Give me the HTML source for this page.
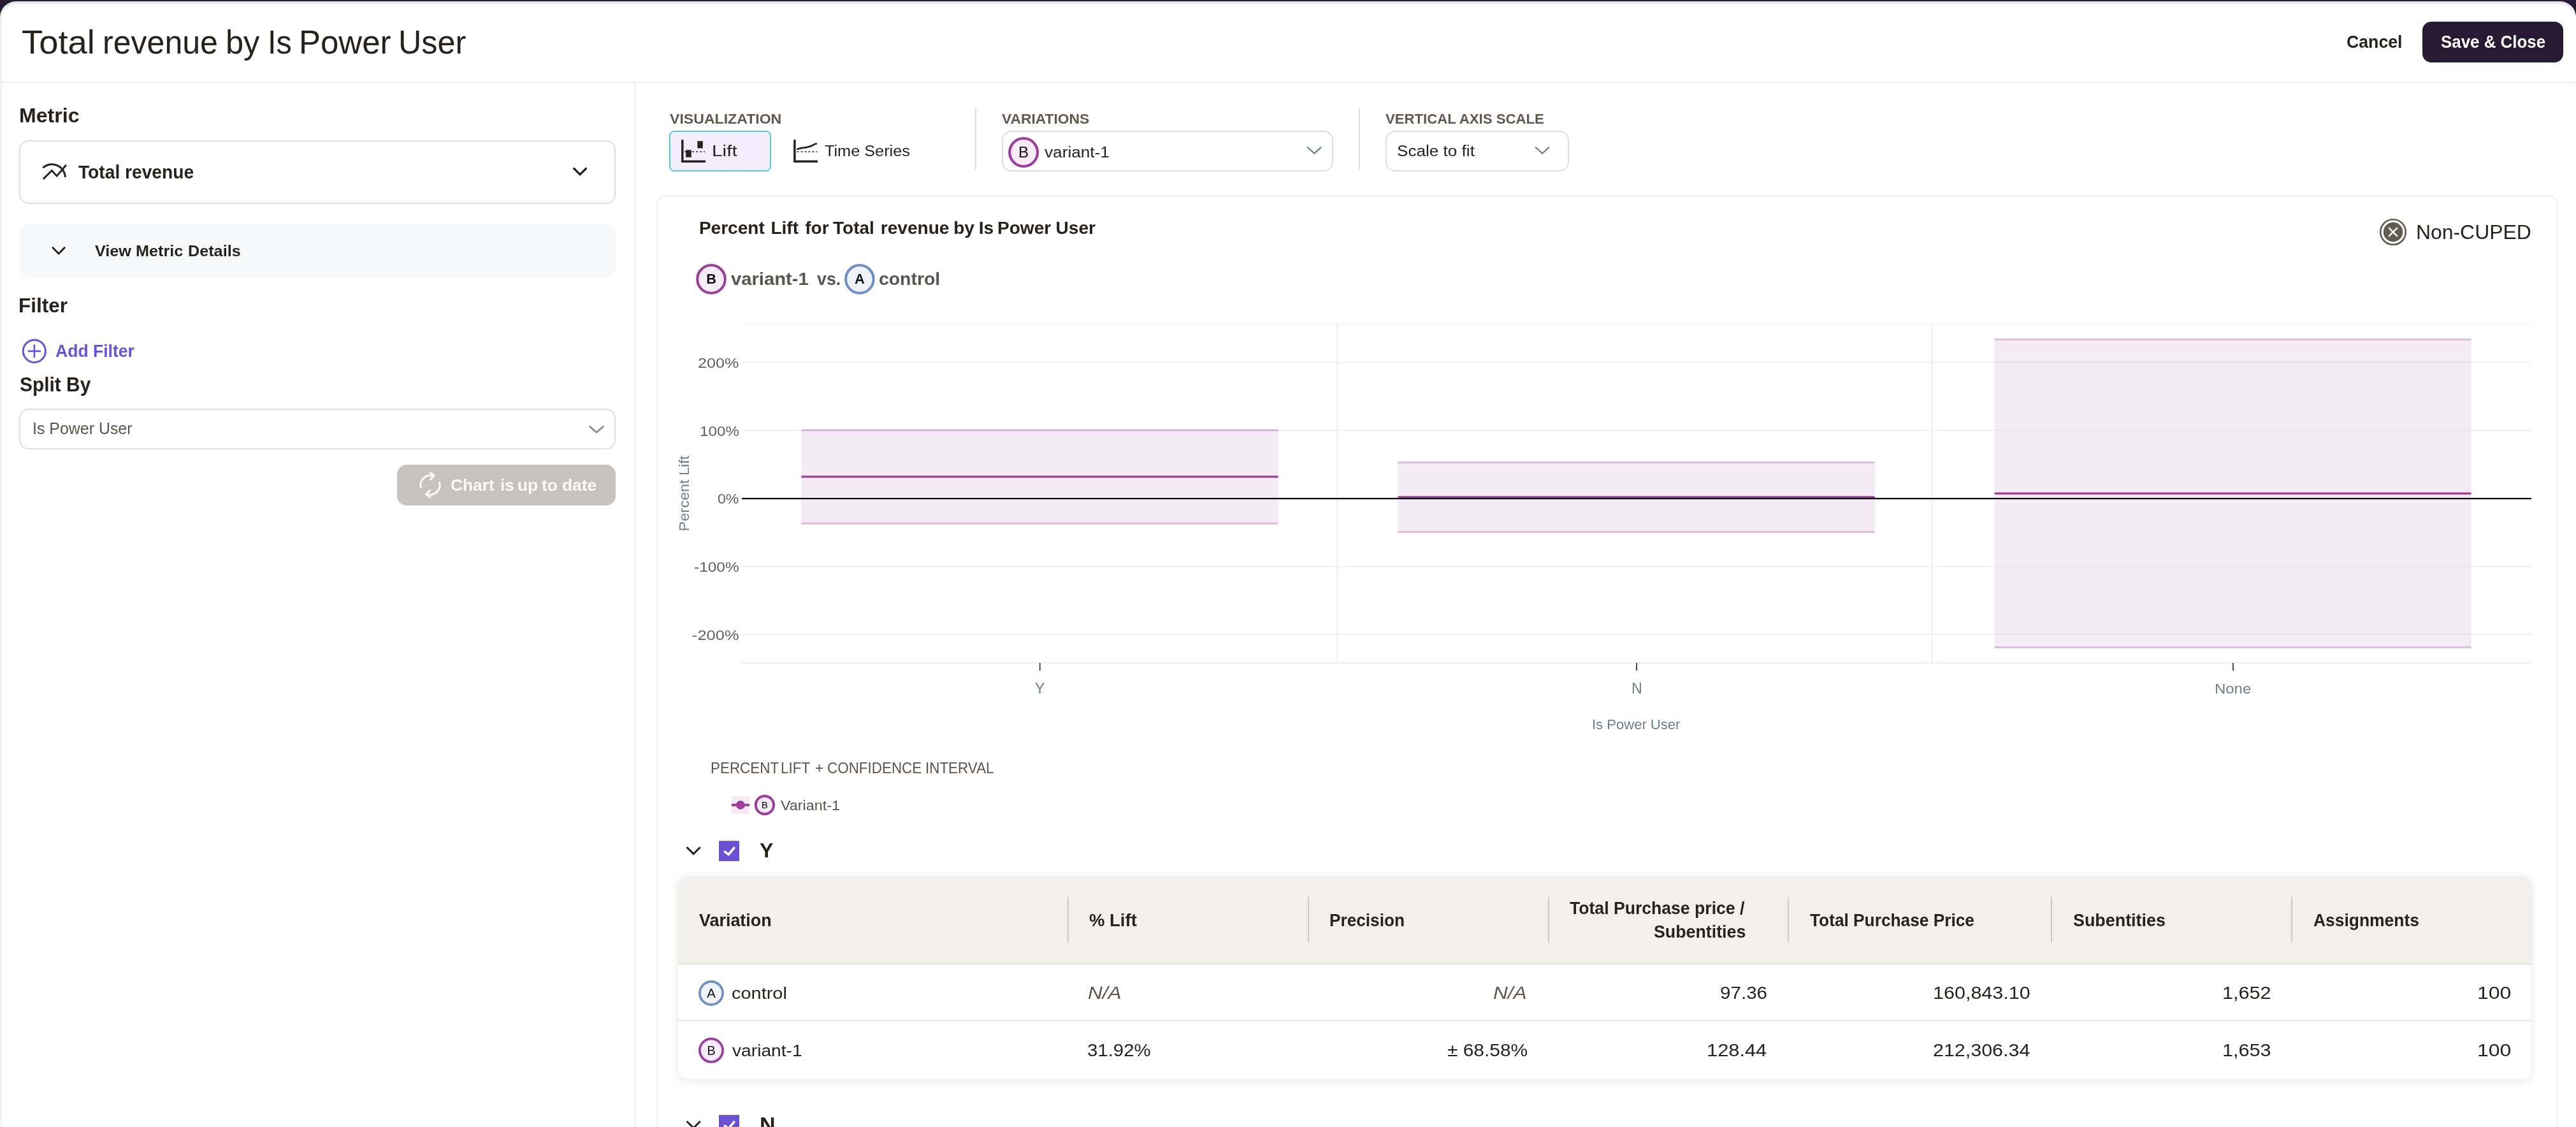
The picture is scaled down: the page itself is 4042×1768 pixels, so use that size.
<!DOCTYPE html>
<html lang="en"><head><meta charset="utf-8"><title>Total revenue by Is Power User</title>
<style>
html,body{margin:0;padding:0}
html{width:4042px;height:1768px}
body{width:4042px;height:1768px;overflow:hidden;background:#271b35;font-family:"Liberation Sans",sans-serif;position:relative}
#bg{position:absolute;left:0;top:2px;width:4042px;height:1766px;background:#fff;border-radius:25px 25px 0 0;box-shadow:inset 0 5px 5px -3px rgba(0,0,0,.20),inset 5px 0 5px -3px rgba(20,20,40,.08)}
#modal{position:absolute;left:0;top:0;width:4042px;height:1768px;overflow:hidden;will-change:transform}
.t{position:absolute;white-space:pre;transform-origin:0 0}
.b{position:absolute;box-sizing:border-box}
svg{position:absolute;overflow:visible}
.sel{border:2px solid #dae0e7;border-radius:15px;background:transparent}
.circ{position:absolute;box-sizing:border-box;border-radius:50%;text-align:center;color:#111}
.cB{border-color:#9c3d9c;background:#f6ebf6;border-style:solid}
.cA{border-color:#6e8ec5;background:#f0f2f9;border-style:solid}

</style></head>
<body>
<div id="bg"></div>
<div id="modal">
<!-- header -->
<div class="b" style="left:0;top:128px;width:4042px;height:2px;background:#e9eef3"></div>
<div class="b" style="left:3801px;top:34px;width:221px;height:64px;background:#281a33;border-radius:14px"></div>
<!-- left panel divider -->
<div class="b" style="left:996px;top:130px;width:2px;height:1640px;background:#e9eef3"></div>
<!-- metric select -->
<div class="b sel" style="left:29.6px;top:219.7px;width:936.3px;height:100.6px"></div>
<!-- view metric details -->
<div class="b" style="left:30.6px;top:351.8px;width:935.2px;height:83.6px;background:#f7f8fa;border-radius:16px"></div>
<!-- split by select -->
<div class="b sel" style="left:29.6px;top:640.9px;width:936.3px;height:64px"></div>
<!-- chart-up-to-date button -->
<div class="b" style="left:623px;top:729px;width:343px;height:64px;background:#c7c3bc;border-radius:15px"></div>

<!-- toolbar -->
<div class="b" style="left:1050px;top:205.2px;width:160px;height:63.6px;background:#f3eefc;border:2px solid #5bc8e6;border-radius:8px"></div>
<div class="b" style="left:1530px;top:169.8px;width:2px;height:96px;background:#d5dde5"></div>
<div class="b" style="left:2132px;top:169.8px;width:2px;height:96px;background:#d5dde5"></div>
<div class="b sel" style="left:1571.6px;top:204.8px;width:520.4px;height:64.4px"></div>
<div class="b sel" style="left:2173.6px;top:204.8px;width:288.6px;height:64.4px"></div>

<!-- chart card -->
<div class="b" style="left:1030px;top:306px;width:2984px;height:1500px;border:2px solid #ecf0f5;border-radius:15px"></div>

<!-- table -->
<div class="b" style="left:1064px;top:1375px;width:2908px;height:318px;border-radius:15px;background:#fff;box-shadow:0 2px 14px rgba(40,30,20,.10),0 0 3px rgba(40,30,20,.05);overflow:hidden">
  <div class="b" style="left:0;top:0;width:2908px;height:136px;background:#f1f0ed"></div>
  <div class="b" style="left:0;top:136px;width:2908px;height:2px;background:#e6e2dd"></div>
  <div class="b" style="left:0;top:225.4px;width:2908px;height:2px;background:#e9e6e2"></div>
</div>
<div class="b" style="left:1675px;top:1406.8px;width:2px;height:72px;background:#cfcbc3"></div>
<div class="b" style="left:2051.7px;top:1406.8px;width:2px;height:72px;background:#cfcbc3"></div>
<div class="b" style="left:2428.8px;top:1406.8px;width:2px;height:72px;background:#cfcbc3"></div>
<div class="b" style="left:2805px;top:1406.8px;width:2px;height:72px;background:#cfcbc3"></div>
<div class="b" style="left:3218px;top:1406.8px;width:2px;height:72px;background:#cfcbc3"></div>
<div class="b" style="left:3594.7px;top:1406.8px;width:2px;height:72px;background:#cfcbc3"></div>

<svg style="left:0;top:0" width="4042" height="1768" viewBox="0 0 4042 1768" fill="none">

  <!-- metric icon -->
  <g stroke="#26221e" stroke-width="2.9" stroke-linejoin="miter">
    <path d="M67.3 263.2 A21 21 0 0 1 102.4 278"/>
    <path d="M67.8 280.9 L81.3 267.5 L89.1 276.1 L103.9 258.8"/>
  </g>
  <!-- chevrons -->
  <path d="M899.9 263.6 L910.1 273.8 L920.3 263.6" stroke="#26221e" stroke-width="2.9" />
  <path d="M82.1 387.8 L92.1 397.9 L102.1 387.8" stroke="#26221e" stroke-width="2.9" />
  <path d="M924.8 668.5 L936 678.4 L947.2 668.5" stroke="#76838f" stroke-width="2.4" />
  <path d="M2051.3 230.6 L2062.3 240.6 L2073.3 230.6" stroke="#76838f" stroke-width="2.4" />
  <path d="M2409 230.6 L2420 240.6 L2431 230.6" stroke="#76838f" stroke-width="2.4" />
  <path d="M1077.6 1329 L1088.2 1339.6 L1098.8 1329" stroke="#26221e" stroke-width="3" />
  <path d="M1077.6 1759 L1088.2 1769.6 L1098.8 1759" stroke="#26221e" stroke-width="3" />
  <!-- add filter -->
  <g stroke="#6a52d9">
    <circle cx="53.9" cy="550.8" r="17.6" stroke-width="3"/>
    <path d="M43.6 550.8 H64.2 M53.9 540.5 V561.1" stroke-width="2.7"/>
  </g>


  <g stroke="#fbf9f5" stroke-width="3" stroke-linecap="butt" stroke-linejoin="miter">
    <path d="M660.9 766.1 A15 15 0 0 1 680.1 746.9"/>
    <path d="M689.1 755.9 A15 15 0 0 1 669.9 775.1"/>
    <path d="M674.2 740.7 L681 745.8 L675 753.3"/>
    <path d="M675.6 768.3 L668.8 775.6 L675.8 781"/>
  </g>
  <path d="M899.9 263.6 L910.1 273.8 L920.3 263.6" stroke="#26221e" stroke-width="2.9" />


  <g stroke="#26221e">
    <path d="M1070.8 219.2 V253.2 H1106.9" stroke-width="3.5"/>
    <path d="M1074 238 H1106" stroke-width="1.7" stroke-dasharray="3 3"/>
    <path d="M1246.9 219.2 V253.2 H1283" stroke-width="3.5"/>
    <path d="M1250.5 238 H1282.5" stroke-width="1.7" stroke-dasharray="3 3"/>
    <path d="M1250.3 234.3 C1253 233.5 1255.5 232.6 1258.5 232.1 S1263.5 231.6 1266.6 230.9 S1272.6 229.3 1276.4 227.2 S1279.6 225.8 1281.8 225.1" stroke-width="2.7"/>
  </g>
  <rect x="1094.3" y="221.3" width="8.5" height="11.3" fill="#26221e"/>
  <rect x="1076.2" y="235.3" width="8.6" height="11.4" fill="#26221e"/>


  <!-- non-cuped -->
  <circle cx="3755" cy="364" r="19.8" stroke="#625b52" stroke-width="2.6"/>
  <circle cx="3755" cy="364" r="15.2" fill="#625b52"/>
  <path d="M3748.2 357.2 L3761.8 370.8 M3761.8 357.2 L3748.2 370.8" stroke="#fff" stroke-width="2.5"/>
  <!-- grid -->
  <g stroke="#eaeff5" stroke-width="1.6">
    <path d="M1164 508.4 H3972" stroke="#eef1f5" stroke-width="1.3"/>
    <path d="M1164 568.6 H3972 M1164 675.3 H3972 M1164 888.7 H3972 M1164 995.4 H3972"/>
    <path d="M1164 1039.9 H3972" stroke="#e6ebf2" stroke-width="1.9"/>
    <path d="M2097.9 508.4 V1039.9 M3032 508.4 V1039.9" stroke-width="1.8"/>
  </g>
  <!-- CI bars -->
  <g fill="#9c3d9c" fill-opacity="0.10">
    <rect x="1257.4" y="674.7" width="748.2" height="146.6"/>
    <rect x="2193.4" y="725.5" width="748.2" height="108.9"/>
    <rect x="3129.5" y="532.4" width="748.1" height="483"/>
  </g>
  <g stroke="#9c3d9c" stroke-opacity="0.30" stroke-width="3">
    <path d="M1257.4 674.7 H2005.6 M1257.4 821.3 H2005.6"/>
    <path d="M2193.4 725.5 H2941.6 M2193.4 834.4 H2941.6"/>
    <path d="M3129.5 532.4 H3877.6 M3129.5 1015.4 H3877.6"/>
  </g>
  <g stroke="#9c3d9c" stroke-width="3.2">
    <path d="M1257.4 747.8 H2005.6"/>
    <path d="M2193.4 779.8 H2941.6"/>
    <path d="M3129.5 774.1 H3877.6"/>
  </g>
  <path d="M1164 782.1 H3972" stroke="#000" stroke-width="2.1"/>
  <!-- x ticks -->
  <path d="M1631.7 1040 V1052 M2568 1040 V1052 M3504 1040 V1052" stroke="#444" stroke-width="1.9"/>
  <!-- legend -->
  <rect x="1148" y="1249.1" width="28" height="27.6" fill="#f6eaf5"/>
  <path d="M1148 1262.9 H1176" stroke="#9c3d9c" stroke-width="4"/>
  <circle cx="1161.9" cy="1262.9" r="6.9" fill="#9c3d9c"/>
  <!-- checkboxes -->
  <rect x="1128" y="1319.1" width="32" height="31.8" fill="#6b52d3"/>
  <path d="M1137.4 1336.2 L1143.2 1340.6 L1151.8 1330.2" stroke="#fff" stroke-width="3.6" stroke-linecap="round" stroke-linejoin="round"/>
  <rect x="1128" y="1749.1" width="32" height="31.8" fill="#6b52d3"/>
  <path d="M1137.4 1766.2 L1143.2 1770.6 L1151.8 1760.2" stroke="#fff" stroke-width="3.6" stroke-linecap="round" stroke-linejoin="round"/>

  <!-- variant badges -->
  <circle cx="1606.1" cy="239" r="21.95" stroke="#9c3d9c" stroke-width="4.1" fill="#f6ebf6"/>
  <text x="1606.1" y="247.32" text-anchor="middle" font-family="Liberation Sans, sans-serif" font-size="24.2" font-weight="400" fill="#111">B</text>
  <circle cx="1116" cy="437.9" r="21.80" stroke="#9c3d9c" stroke-width="4" fill="#f6ebf6"/>
  <text x="1116" y="445.40" text-anchor="middle" font-family="Liberation Sans, sans-serif" font-size="21.8" font-weight="700" fill="#111">B</text>
  <circle cx="1348.9" cy="437.9" r="21.80" stroke="#6e8ec5" stroke-width="4" fill="#f0f2f9"/>
  <text x="1348.9" y="445.40" text-anchor="middle" font-family="Liberation Sans, sans-serif" font-size="21.8" font-weight="700" fill="#111">A</text>
  <circle cx="1199.9" cy="1262.9" r="14.15" stroke="#9c3d9c" stroke-width="4" fill="#f6ebf6"/>
  <text x="1199.9" y="1268.13" text-anchor="middle" font-family="Liberation Sans, sans-serif" font-size="15.2" font-weight="400" fill="#111">B</text>
  <circle cx="1116" cy="1558" r="18.10" stroke="#6e8ec5" stroke-width="3.7" fill="#f0f2f9"/>
  <text x="1116" y="1564.95" text-anchor="middle" font-family="Liberation Sans, sans-serif" font-size="20.2" font-weight="400" fill="#111">A</text>
  <circle cx="1116" cy="1647.8" r="18.10" stroke="#9c3d9c" stroke-width="3.7" fill="#f6ebf6"/>
  <text x="1116" y="1654.61" text-anchor="middle" font-family="Liberation Sans, sans-serif" font-size="19.8" font-weight="400" fill="#111">B</text>
</svg>

<div class='t' style='left:33.7px;top:41.4px;font-size:51.02px;line-height:51.02px;color:#26221e;transform:scaleX(1.0655);'>Total</div>
<div class='t' style='left:160.7px;top:41.4px;font-size:51.02px;line-height:51.02px;color:#26221e;transform:scaleX(0.9812);'>revenue</div>
<div class='t' style='left:354.0px;top:41.4px;font-size:51.02px;line-height:51.02px;color:#26221e;transform:scaleX(0.9908);'>by</div>
<div class='t' style='left:419.7px;top:41.4px;font-size:51.02px;line-height:51.02px;color:#26221e;transform:scaleX(0.9539);'>Is</div>
<div class='t' style='left:468.9px;top:41.4px;font-size:51.02px;line-height:51.02px;color:#26221e;'>Power</div>
<div class='t' style='left:625.4px;top:41.4px;font-size:51.02px;line-height:51.02px;color:#26221e;transform:scaleX(0.9864);'>User</div>
<div class='t' style='left:3681.5px;top:52.2px;font-size:27.35px;line-height:27.35px;color:#26221e;font-weight:700;transform:scaleX(0.9762);'>Cancel</div>
<div class='t' style='left:3829.8px;top:52.2px;font-size:27.35px;line-height:27.35px;color:#ffffff;font-weight:700;transform:scaleX(0.9471);'>Save &amp; Close</div>
<div class='t' style='left:29.5px;top:166.3px;font-size:30.61px;line-height:30.61px;color:#26221e;font-weight:700;transform:scaleX(1.0484);'>Metric</div>
<div class='t' style='left:122.5px;top:255.9px;font-size:29.05px;line-height:29.05px;color:#26221e;font-weight:700;transform:scaleX(0.9702);'>Total revenue</div>
<div class='t' style='left:148.5px;top:382.4px;font-size:24.52px;line-height:24.52px;color:#26221e;font-weight:700;transform:scaleX(1.0280);'>View</div>
<div class='t' style='left:212.7px;top:382.4px;font-size:24.52px;line-height:24.52px;color:#26221e;font-weight:700;transform:scaleX(1.0280);'>Metric</div>
<div class='t' style='left:295.0px;top:382.4px;font-size:24.52px;line-height:24.52px;color:#26221e;font-weight:700;transform:scaleX(1.0280);'>Details</div>
<div class='t' style='left:29.2px;top:464.8px;font-size:30.89px;line-height:30.89px;color:#26221e;font-weight:700;transform:scaleX(1.0208);'>Filter</div>
<div class='t' style='left:86.6px;top:537.2px;font-size:27.49px;line-height:27.49px;color:#6a52d9;font-weight:700;transform:scaleX(0.9661);'>Add Filter</div>
<div class='t' style='left:31.2px;top:587.8px;font-size:30.61px;line-height:30.61px;color:#26221e;font-weight:700;transform:scaleX(0.9770);'>Split By</div>
<div class='t' style='left:51.1px;top:659.8px;font-size:25.65px;line-height:25.65px;color:#5a544c;transform:scaleX(0.9720);'>Is Power User</div>
<div class='t' style='left:706.5px;top:748.5px;font-size:25.51px;line-height:25.51px;color:#fbf9f5;font-weight:700;transform:scaleX(1.0320);'>Chart</div>
<div class='t' style='left:784.6px;top:748.5px;font-size:25.51px;line-height:25.51px;color:#fbf9f5;font-weight:700;transform:scaleX(1.0320);'>is</div>
<div class='t' style='left:812.0px;top:748.5px;font-size:25.51px;line-height:25.51px;color:#fbf9f5;font-weight:700;transform:scaleX(1.0320);'>up</div>
<div class='t' style='left:849.5px;top:748.5px;font-size:25.51px;line-height:25.51px;color:#fbf9f5;font-weight:700;transform:scaleX(1.0320);'>to</div>
<div class='t' style='left:881.9px;top:748.5px;font-size:25.51px;line-height:25.51px;color:#fbf9f5;font-weight:700;transform:scaleX(1.0320);'>date</div>
<div class='t' style='left:1050.6px;top:176.3px;font-size:22.53px;line-height:22.53px;color:#5f584f;font-weight:700;transform:scaleX(1.0254);'>VISUALIZATION</div>
<div class='t' style='left:1572.2px;top:176.3px;font-size:22.53px;line-height:22.53px;color:#5f584f;font-weight:700;transform:scaleX(1.0133);'>VARIATIONS</div>
<div class='t' style='left:2174.3px;top:176.3px;font-size:22.53px;line-height:22.53px;color:#5f584f;font-weight:700;transform:scaleX(0.9845);'>VERTICAL AXIS SCALE</div>
<div class='t' style='left:1117.0px;top:224.5px;font-size:24.52px;line-height:24.52px;color:#26221e;transform:scaleX(1.2171);'>Lift</div>
<div class='t' style='left:1294.4px;top:224.5px;font-size:24.52px;line-height:24.52px;color:#26221e;transform:scaleX(1.0308);'>Time Series</div>
<div class='t' style='left:1639.0px;top:226.6px;font-size:24.52px;line-height:24.52px;color:#26221e;transform:scaleX(1.0681);'>variant-1</div>
<div class='t' style='left:2191.8px;top:224.6px;font-size:24.23px;line-height:24.23px;color:#26221e;transform:scaleX(1.0779);'>Scale to fit</div>
<div class='t' style='left:1096.9px;top:344.4px;font-size:28.06px;line-height:28.06px;color:#26221e;font-weight:700;'>Percent</div>
<div class='t' style='left:1209.4px;top:344.4px;font-size:28.06px;line-height:28.06px;color:#26221e;font-weight:700;'>Lift</div>
<div class='t' style='left:1263.2px;top:344.4px;font-size:28.06px;line-height:28.06px;color:#26221e;font-weight:700;'>for</div>
<div class='t' style='left:1307.0px;top:344.4px;font-size:28.06px;line-height:28.06px;color:#26221e;font-weight:700;'>Total</div>
<div class='t' style='left:1381.8px;top:344.4px;font-size:28.06px;line-height:28.06px;color:#26221e;font-weight:700;'>revenue</div>
<div class='t' style='left:1496.2px;top:344.4px;font-size:28.06px;line-height:28.06px;color:#26221e;font-weight:700;'>by</div>
<div class='t' style='left:1535.8px;top:344.4px;font-size:28.06px;line-height:28.06px;color:#26221e;font-weight:700;'>Is</div>
<div class='t' style='left:1565.0px;top:344.4px;font-size:28.06px;line-height:28.06px;color:#26221e;font-weight:700;'>Power</div>
<div class='t' style='left:1656.6px;top:344.4px;font-size:28.06px;line-height:28.06px;color:#26221e;font-weight:700;'>User</div>
<div class='t' style='left:3790.9px;top:349.2px;font-size:31.04px;line-height:31.04px;color:#26221e;transform:scaleX(1.0274);'>Non-CUPED</div>
<div class='t' style='left:1146.9px;top:424.4px;font-size:28.06px;line-height:28.06px;color:#5a544c;font-weight:700;transform:scaleX(1.0403);'>variant-1</div>
<div class='t' style='left:1281.7px;top:424.4px;font-size:28.06px;line-height:28.06px;color:#5a544c;font-weight:700;transform:scaleX(0.9544);'>vs.</div>
<div class='t' style='left:1379.0px;top:424.4px;font-size:28.06px;line-height:28.06px;color:#5a544c;font-weight:700;transform:scaleX(1.0114);'>control</div>
<div class='t' style='left:1095.2px;top:557.8px;font-size:22.67px;line-height:22.67px;color:#5e5e5e;transform:scaleX(1.1091);'>200%</div>
<div class='t' style='left:1097.5px;top:664.5px;font-size:22.67px;line-height:22.67px;color:#5e5e5e;transform:scaleX(1.0686);'>100%</div>
<div class='t' style='left:1126.1px;top:771.3px;font-size:22.67px;line-height:22.67px;color:#5e5e5e;transform:scaleX(1.0184);'>0%</div>
<div class='t' style='left:1088.7px;top:877.9px;font-size:22.67px;line-height:22.67px;color:#5e5e5e;transform:scaleX(1.0801);'>-100%</div>
<div class='t' style='left:1086.0px;top:984.6px;font-size:22.67px;line-height:22.67px;color:#5e5e5e;transform:scaleX(1.1221);'>-200%</div>
<div class='t' style='left:1073.6px;top:774.2px;font-size:22.53px;line-height:22.53px;color:#6f7d8c;font-weight:400;transform:translate(-50%,-50%) rotate(-90deg) scaleX(1.0429);transform-origin:50% 50%'>Percent Lift</div>
<div class='t' style='left:1623.7px;top:1068.6px;font-size:23.55px;line-height:23.55px;color:#6f7d8c;'>Y</div>
<div class='t' style='left:2559.6px;top:1068.6px;font-size:23.55px;line-height:23.55px;color:#6f7d8c;transform:scaleX(0.9867);'>N</div>
<div class='t' style='left:3475.3px;top:1069.1px;font-size:22.96px;line-height:22.96px;color:#6f7d8c;transform:scaleX(1.0432);'>None</div>
<div class='t' style='left:2498.0px;top:1125.7px;font-size:22.25px;line-height:22.25px;color:#6f7d8c;transform:scaleX(0.9906);'>Is Power User</div>
<div class='t' style='left:1114.5px;top:1193.9px;font-size:23.11px;line-height:23.11px;color:#5a544c;transform:scaleX(0.9702);'>PERCENT</div>
<div class='t' style='left:1225.3px;top:1193.9px;font-size:23.11px;line-height:23.11px;color:#5a544c;transform:scaleX(0.9702);'>LIFT</div>
<div class='t' style='left:1278.8px;top:1193.9px;font-size:23.11px;line-height:23.11px;color:#5a544c;transform:scaleX(0.9702);'>+</div>
<div class='t' style='left:1298.0px;top:1193.9px;font-size:23.11px;line-height:23.11px;color:#5a544c;transform:scaleX(0.9702);'>CONFIDENCE</div>
<div class='t' style='left:1452.1px;top:1193.9px;font-size:23.11px;line-height:23.11px;color:#5a544c;transform:scaleX(0.9702);'>INTERVAL</div>
<div class='t' style='left:1224.6px;top:1252.6px;font-size:22.39px;line-height:22.39px;color:#5a544c;transform:scaleX(1.0419);'>Variant-1</div>
<div class='t' style='left:1192.3px;top:1318.7px;font-size:31.54px;line-height:31.54px;color:#26221e;font-weight:700;transform:scaleX(1.0190);'>Y</div>
<div class='t' style='left:1191.7px;top:1748.7px;font-size:31.54px;line-height:31.54px;color:#26221e;font-weight:700;transform:scaleX(1.0789);'>N</div>
<div class='t' style='left:1096.9px;top:1429.6px;font-size:27.35px;line-height:27.35px;color:#26221e;font-weight:700;transform:scaleX(0.9843);'>Variation</div>
<div class='t' style='left:1708.7px;top:1429.6px;font-size:27.35px;line-height:27.35px;color:#26221e;font-weight:700;transform:scaleX(1.0052);'>% Lift</div>
<div class='t' style='left:2085.7px;top:1429.6px;font-size:27.35px;line-height:27.35px;color:#26221e;font-weight:700;transform:scaleX(0.9577);'>Precision</div>
<div class='t' style='left:2463.2px;top:1411.4px;font-size:27.21px;line-height:27.21px;color:#26221e;font-weight:700;transform:scaleX(0.9775);'>Total Purchase price /</div>
<div class='t' style='left:2595.2px;top:1447.7px;font-size:27.21px;line-height:27.21px;color:#26221e;font-weight:700;transform:scaleX(0.9844);'>Subentities</div>
<div class='t' style='left:2840.0px;top:1429.6px;font-size:27.35px;line-height:27.35px;color:#26221e;font-weight:700;transform:scaleX(0.9606);'>Total Purchase Price</div>
<div class='t' style='left:3253.1px;top:1429.6px;font-size:27.35px;line-height:27.35px;color:#26221e;font-weight:700;transform:scaleX(0.9832);'>Subentities</div>
<div class='t' style='left:3629.8px;top:1429.6px;font-size:27.35px;line-height:27.35px;color:#26221e;font-weight:700;transform:scaleX(0.9662);'>Assignments</div>
<div class='t' style='left:1147.8px;top:1545.2px;font-size:26.22px;line-height:26.22px;color:#26221e;transform:scaleX(1.1032);'>control</div>
<div class='t' style='left:1706.8px;top:1544.6px;font-size:26.89px;line-height:26.89px;color:#5a544c;font-style:italic;transform:scaleX(1.1715);'>N/A</div>
<div class='t' style='left:2343.4px;top:1544.6px;font-size:26.89px;line-height:26.89px;color:#5a544c;font-style:italic;transform:scaleX(1.1715);'>N/A</div>
<div class='t' style='left:2699.4px;top:1544.6px;font-size:26.89px;line-height:26.89px;color:#26221e;transform:scaleX(1.1010);'>97.36</div>
<div class='t' style='left:3033.3px;top:1544.6px;font-size:26.89px;line-height:26.89px;color:#26221e;transform:scaleX(1.1356);'>160,843.10</div>
<div class='t' style='left:3486.6px;top:1544.6px;font-size:26.89px;line-height:26.89px;color:#26221e;transform:scaleX(1.1383);'>1,652</div>
<div class='t' style='left:3886.5px;top:1544.6px;font-size:26.89px;line-height:26.89px;color:#26221e;transform:scaleX(1.1911);'>100</div>
<div class='t' style='left:1148.9px;top:1635.2px;font-size:26.22px;line-height:26.22px;color:#26221e;transform:scaleX(1.0747);'>variant-1</div>
<div class='t' style='left:1706.2px;top:1634.6px;font-size:26.89px;line-height:26.89px;color:#26221e;transform:scaleX(1.0924);'>31.92%</div>
<div class='t' style='left:2270.6px;top:1634.6px;font-size:26.89px;line-height:26.89px;color:#26221e;transform:scaleX(1.1123);'>± 68.58%</div>
<div class='t' style='left:2678.1px;top:1634.6px;font-size:26.89px;line-height:26.89px;color:#26221e;transform:scaleX(1.1464);'>128.44</div>
<div class='t' style='left:3032.6px;top:1634.6px;font-size:26.89px;line-height:26.89px;color:#26221e;transform:scaleX(1.1328);'>212,306.34</div>
<div class='t' style='left:3486.6px;top:1634.6px;font-size:26.89px;line-height:26.89px;color:#26221e;transform:scaleX(1.1383);'>1,653</div>
<div class='t' style='left:3886.5px;top:1634.6px;font-size:26.89px;line-height:26.89px;color:#26221e;transform:scaleX(1.1911);'>100</div>
</div>
</body></html>
